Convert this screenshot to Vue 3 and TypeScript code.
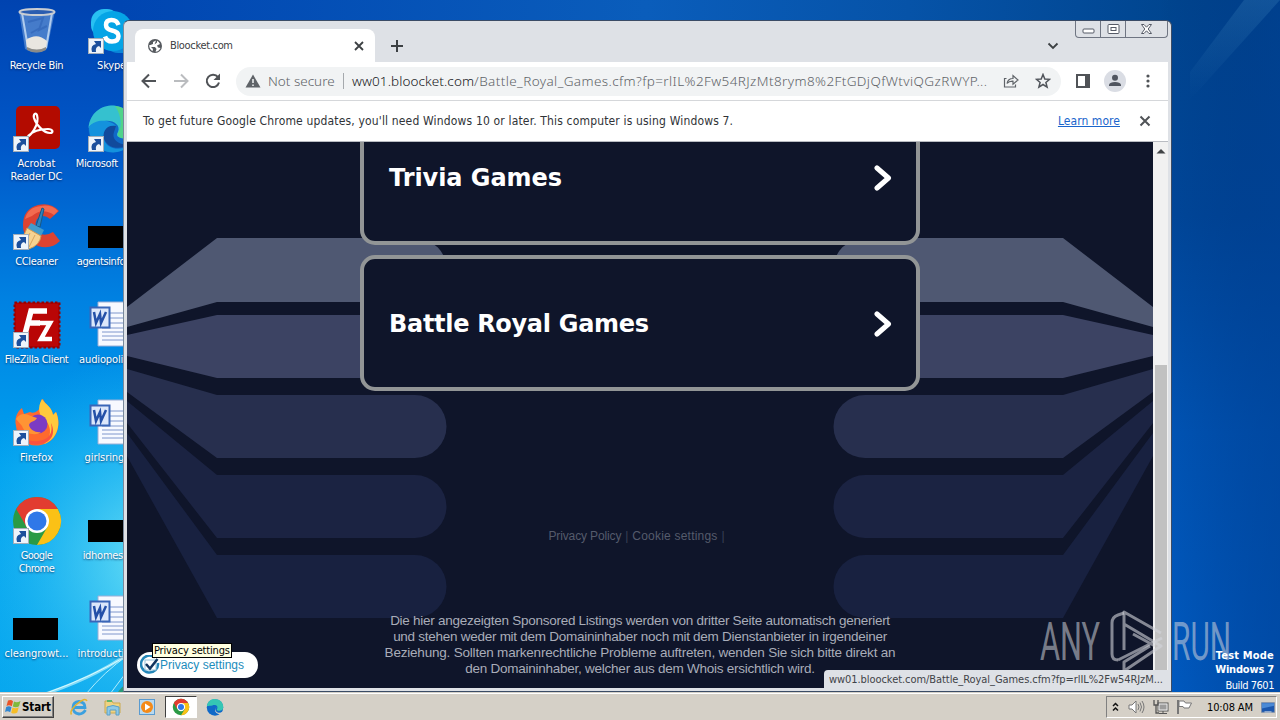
<script setup lang="ts">
interface Shortcut {
  kind: string
  lines: string[]
  widths: number[]
  link: boolean
}

const shortcuts: Shortcut[] = [
  { kind: 'bin', lines: ['Recycle Bin'], widths: [54], link: false },
  { kind: 'skype', lines: ['Skype'], widths: [29], link: true },
  { kind: 'acrobat', lines: ['Acrobat', 'Reader DC'], widths: [38, 52], link: true },
  { kind: 'edge', lines: ['Microsoft  Edge'], widths: [72], link: true },
  { kind: 'ccleaner', lines: ['CCleaner'], widths: [43], link: true },
  { kind: 'black', lines: ['agentsinform...'], widths: [70], link: false },
  { kind: 'filezilla', lines: ['FileZilla Client'], widths: [64], link: true },
  { kind: 'word', lines: ['audiopolitic...'], widths: [65], link: false },
  { kind: 'firefox', lines: ['Firefox'], widths: [33], link: true },
  { kind: 'word', lines: ['girlsring.rtf'], widths: [54], link: false },
  { kind: 'chrome', lines: ['Google', 'Chrome'], widths: [32, 36], link: true },
  { kind: 'black', lines: ['idhomes.jpg'], widths: [58], link: false },
  { kind: 'black', lines: ['cleangrowt...'], widths: [64], link: false },
  { kind: 'word', lines: ['introduction...'], widths: [68], link: false },
]

const cards: { title: string; width: number }[] = [
  { title: 'Trivia Games', width: 173 },
  { title: 'Battle Royal Games', width: 260 },
]

const legal: { text: string; width: number }[] = [
  { text: 'Die hier angezeigten Sponsored Listings werden von dritter Seite automatisch generiert', width: 500 },
  { text: 'und stehen weder mit dem Domaininhaber noch mit dem Dienstanbieter in irgendeiner', width: 494 },
  { text: 'Beziehung. Sollten markenrechtliche Probleme auftreten, wenden Sie sich bitte direkt an', width: 511 },
  { text: 'den Domaininhaber, welcher aus dem Whois ersichtlich wird.', width: 350 },
]

// Tracks a line of text so that it spans the given number of pixels.
const vFit = {
  mounted(el: HTMLElement, binding: { value: number }) {
    const count = (el.textContent ?? '').length
    const natural = el.getBoundingClientRect().width
    if (count > 1) {
      el.style.letterSpacing = `${(binding.value - natural) / (count - 1)}px`
    }
  },
}
</script>

<template>
  <div class="desktop">
    <svg class="wallpaper" viewBox="0 0 1280 720" preserveAspectRatio="none">
      <defs>
        <linearGradient id="wl" x1="0" y1="0" x2="0" y2="1">
          <stop offset="0" stop-color="#0043b0" />
          <stop offset=".2" stop-color="#0057c8" />
          <stop offset=".42" stop-color="#0082e2" />
          <stop offset=".65" stop-color="#00a2ef" />
          <stop offset="1" stop-color="#08a8ee" />
        </linearGradient>
        <linearGradient id="wr" x1="0" y1="0" x2="0" y2="1">
          <stop offset="0" stop-color="#00458f" />
          <stop offset=".3" stop-color="#00479a" />
          <stop offset=".6" stop-color="#0055b6" />
          <stop offset="1" stop-color="#005cc4" />
        </linearGradient>
        <linearGradient id="shade" x1="0" y1="0" x2="1" y2="0">
          <stop offset="0" stop-color="#002a70" stop-opacity="0" />
          <stop offset="1" stop-color="#003b8c" stop-opacity=".5" />
        </linearGradient>
        <linearGradient id="topglow" x1="0" y1="0" x2="1" y2="0">
          <stop offset="0" stop-color="#0046b2" />
          <stop offset=".5" stop-color="#0a5dbb" />
          <stop offset=".75" stop-color="#0653a8" />
          <stop offset="1" stop-color="#00458f" />
        </linearGradient>
        <radialGradient id="cy" cx="160" cy="560" r="210" gradientUnits="userSpaceOnUse">
          <stop offset="0" stop-color="#7deaf6" stop-opacity=".9" />
          <stop offset="1" stop-color="#20b8f4" stop-opacity="0" />
        </radialGradient>
        <linearGradient id="ray" x1="0" y1="0" x2="0" y2="1">
          <stop offset="0" stop-color="#3f86bd" stop-opacity=".28" />
          <stop offset="1" stop-color="#3f86bd" stop-opacity="0" />
        </linearGradient>
      </defs>
      <rect width="640" height="720" fill="url(#wl)" />
      <rect x="640" width="640" height="720" fill="url(#wr)" />
      <rect x="120" width="1052" height="40" fill="url(#topglow)" />
      <rect x="1160" y="0" width="120" height="720" fill="url(#shade)" />
      <rect width="380" height="720" fill="url(#cy)" />
      <path d="M1280 0H1244L1190 72V100Z" fill="url(#ray)" />
      <g fill="none" stroke="#d6fbff">
        <path d="M36 697Q90 680 128 654" stroke-width="3" opacity=".6" />
        <path d="M44 694Q94 676 128 655" stroke-width="1" />
        <path d="M86 694Q104 672 128 655M110 694L128 670" stroke-width="1" opacity=".8" />
      </g>
      <path d="M118 692Q122 686 126 685V692Z" fill="#2a9a78" />
    </svg>

    <div class="shortcuts">
      <div v-for="(item, i) in shortcuts" :key="i" class="shortcut">
        <svg class="pict" viewBox="0 0 48 48">
          <g v-if="item.kind === 'bin'">
            <path d="M6 5L12 43Q23 50 34 43L42 5Z" fill="#7da8dc" fill-opacity=".55" />
            <path d="M9 7L15 42M39 7L33 42" stroke="#d4e7fa" stroke-width="2" opacity=".75" />
            <path d="M13 34Q24 26 34 35L33 43Q24 48 14 43Z" fill="#e9e6e0" />
            <path d="M14 41Q24 46 33 41L33 44Q24 49 14 44Z" fill="#8b8b88" />
            <ellipse cx="24" cy="6" rx="17.5" ry="3" fill="#2b5db0" stroke="#c9cdd2" stroke-width="2" />
            <path d="M15 16L30 12L26 24L34 20M18 27L27 22" stroke="#2e62b5" stroke-width="2" fill="none" opacity=".6" />
          </g>
          <g v-else-if="item.kind === 'skype'">
            <rect x="3" y="3" width="29" height="29" rx="13" fill="#28c0f2" />
            <rect x="17" y="16" width="31" height="31" rx="13" fill="#0a86d8" />
            <circle cx="25" cy="25" r="20" fill="#05a4e6" />
            <path d="M30.500 19Q29 14 23.500 14Q18 14 18 19Q18 23 24 24.500Q30.500 26 30.500 30Q30.500 35.500 24 35.500Q18.500 35.500 17 30.500" fill="none" stroke="#fff" stroke-width="4.500" />
          </g>
          <g v-else-if="item.kind === 'acrobat'">
            <rect x="3" y="2" width="44" height="43" rx="5" fill="#b30b00" />
            <path d="M12 34C17 33 27 21 24 11C23 8 20 10 21 14C23 21 31 29 37 29C41 29 40 25 35 25C27 25 19 28 15 32" fill="none" stroke="#fff" stroke-width="2.200" stroke-linejoin="round" />
          </g>
          <g v-else-if="item.kind === 'edge'">
            <circle cx="24" cy="25" r="23.500" fill="#1069c8" />
            <path d="M.5 24C2 8 14 1 26 1.500C39 3 47 13 47 24C47 32 40 35 33 34C29 33 28 31 30 28C33 21 25 16 17 17C8 18 3 20 .5 24Z" fill="#35c1cf" />
            <path d="M27 2C40 3 47 14 47 24C47 32 39 35 33 34C29 32 29 30 31 27C35 19 31 7 27 2Z" fill="#5ad873" opacity=".75" />
            <path d="M1 23C8 14 23 16 28 22C19 21 13 28 17 38C21 45 31 47 41 42C32 51 17 50 9 42C3 36 1 30 1 23Z" fill="#1492dd" />
            <path d="M28 22C18 20 13 29 17 37C22 45 33 46 42 40C32 42 23 36 26 28Z" fill="#114a9c" />
          </g>
          <g v-else-if="item.kind === 'ccleaner'">
            <path d="M46 9Q38 0 25 3Q10 7 10 23Q10 38 25 44Q38 48 47 39L40 30Q32 35 26 31Q20 25 24 17Q30 11 37 17Z" fill="#dc4332" />
            <path d="M12 17Q15 5 28 4Q38 2 45 9L41 13Q29 5 19 14Z" fill="#f26b50" />
            <path d="M29 6L31 7L27 25L23 24Z" fill="#2d84be" stroke="#185886" />
            <path d="M18 21L31 28L28 34L14 27Z" fill="#429ccc" />
            <path d="M14 26L28 34Q27 43 16 47L3 40Q11 35 14 26Z" fill="#f5d391" stroke="#d19a50" />
            <path d="M17 31L11 43M22 33L16 45" stroke="#d8a45c" />
          </g>
          <g v-else-if="item.kind === 'filezilla'">
            <rect x="1.500" y="2.500" width="45" height="45" fill="#b40000" stroke="#940000" stroke-width="2" stroke-dasharray="2.500 2" />
            <rect x="3" y="4" width="42" height="42" fill="#b90606" />
            <path d="M11 38L18 11H34M14 23H27" fill="none" stroke="#fff" stroke-width="5.500" />
            <path d="M26 23H37L28 39H39" fill="none" stroke="#fff" stroke-width="4.500" />
          </g>
          <g v-else-if="item.kind === 'firefox'">
            <path d="M3 28C1 19 5 13 9 10L11 16L17 14C21 16 26 13 28 8C27 5 28 2 30 1C32 7 39 9 40 17L43 14C49 27 44 44 28 47C15 50 4 41 3 28Z" fill="#ff6a2d" />
            <path d="M29 1C33 7 39 9 40 17L43 14C49 28 43 42 31 46C40 38 38 27 31 21C26 17 24 10 29 1Z" fill="#ffc93c" />
            <path d="M4 29C7 41 17 44 25 43C37 42 40 34 38 25C43 35 39 44 28 46C14 49 4 41 4 29Z" fill="#fb5340" />
            <circle cx="25" cy="26" r="9.500" fill="#7b3bc4" />
            <path d="M3 21C8 14 13 16 18 18L24 20C22 24 17 23 16 27C17 32 23 35 28 34C24 38 12 37 9 28Z" fill="#ff9434" />
          </g>
          <g v-else-if="item.kind === 'chrome'">
            <circle cx="24" cy="25" r="24" fill="#2a9a45" />
            <path d="M3.200 13A24 24 0 0 1 44.800 13H24L13.600 31Z" fill="#e23c30" />
            <path d="M44.800 13A24 24 0 0 1 24 49L34.400 31L24 13Z" fill="#fbc116" />
            <circle cx="24" cy="25" r="12" fill="#fff" />
            <circle cx="24" cy="25" r="9.500" fill="#2f78e8" />
          </g>
          <g v-else-if="item.kind === 'word'">
            <path d="M10 2H48V46H10Z" fill="#f7f9ff" stroke="#9aaed6" />
            <path d="M14 13H46M14 18H46M14 23H46M14 28H46M14 32H46M14 36H46M14 40H46" stroke="#7f96cc" />
            <rect x="2.500" y="7.500" width="19" height="20" fill="#dce7fb" stroke="#3a66b8" stroke-width="2" />
            <path d="M6 12L8 23L12 14L13 23L18 12" fill="none" stroke="#2450a8" stroke-width="2.500" />
          </g>
          <rect v-else x="0" y="24" width="45" height="22" fill="#000" />
          <g v-if="item.link">
            <rect x=".5" y="32.500" width="15" height="15" fill="#eef4fb" stroke="#a3aeba" />
            <path d="M4 46Q2 39 8 38L6 35H13V42L11 40Q7 41 8 46Z" fill="#1c4f9c" />
          </g>
        </svg>
        <div v-for="(line, n) in item.lines" :key="n" class="caption">
          <span v-fit="item.widths[n]" class="run">{{ line }}</span>
        </div>
      </div>
    </div>

    <svg class="watermark" viewBox="0 0 200 70">
      <g fill="#d3d5dc" fill-opacity=".55">
        <text x="4" y="54" textLength="60" lengthAdjust="spacingAndGlyphs" class="brand">ANY</text>
        <text x="136" y="54" textLength="59" lengthAdjust="spacingAndGlyphs" class="brand">RUN</text>
      </g>
      <g fill="none" stroke="#d3d5dc" stroke-opacity=".6" stroke-width="3" stroke-linejoin="round">
        <path d="M88 7L82 9Q76 11 76 17V48Q76 54 82 54" />
        <path d="M88 44V6L125 27M88 18L125 40L88 65V56L114 40" />
        <path d="M97 28L119 40M82 54L126 32" />
      </g>
    </svg>

    <div class="build">
      <span v-fit="58" class="run strong">Test Mode</span>
      <span v-fit="59" class="run strong">Windows 7</span>
      <span v-fit="49" class="run last">Build 7601</span>
    </div>

    <div class="window">
      <div class="tabstrip">
        <div class="tab">
          <svg width="16" height="16" viewBox="0 0 16 16">
            <circle cx="8" cy="8" r="7" fill="#55595e" />
            <path d="M9 2.500L6 4V6L3.500 7L2.300 7Q2 11 5.500 13.200L6 11L4 9H8L9.500 11L8.500 13.800Q12 13.500 13.500 10L11 9.500L10 7.500L13 6Q12 3.500 10 2.700L10 4.500L7.500 6.500" fill="#fff" />
          </svg>
          <span v-fit="63" class="run tabname">Bloocket.com</span>
          <svg class="tabclose" width="10" height="10" viewBox="0 0 10 10"><path d="M1 1L9 9M9 1L1 9" stroke="#3c4043" stroke-width="1.800" /></svg>
        </div>
        <svg class="plus" width="12" height="12" viewBox="0 0 12 12"><path d="M6 0V12M0 6H12" stroke="#3c4043" stroke-width="2" /></svg>
        <svg class="drop" width="12" height="8" viewBox="0 0 12 8"><path d="M1.500 1.500L6 6L10.500 1.500" fill="none" stroke="#3c4043" stroke-width="1.800" /></svg>
        <div class="controls">
          <span class="ctl"><svg width="13" height="13" viewBox="0 0 13 13"><rect x="1" y="6" width="11" height="4" rx="1" fill="#fff" stroke="#555a66" /></svg></span>
          <span class="ctl"><svg width="13" height="13" viewBox="0 0 13 13"><rect x="1" y="1.500" width="11" height="9" rx="1" fill="#fff" stroke="#555a66" /><rect x="4" y="4.500" width="5" height="3" fill="#fff" stroke="#555a66" /></svg></span>
          <span class="ctl wide"><svg width="13" height="13" viewBox="0 0 13 13"><path d="M1.500 1.500H4L6.500 4.200L9 1.500H11.500L8.200 6L11.500 10.500H9L6.500 7.800L4 10.500H1.500L4.800 6Z" fill="#fff" stroke="#555a66" /></svg></span>
        </div>
      </div>

      <div class="toolbar">
        <svg class="back" width="16" height="16" viewBox="0 0 16 16"><path d="M15 8H2M8 1.500L1.500 8L8 14.500" fill="none" stroke="#505357" stroke-width="2" /></svg>
        <svg class="fwd" width="16" height="16" viewBox="0 0 16 16"><path d="M1 8H14M8 1.500L14.500 8L8 14.500" fill="none" stroke="#babcbf" stroke-width="2" /></svg>
        <svg class="reload" width="16" height="16" viewBox="0 0 16 16"><path d="M13 4.200A6.200 6.200 0 1 0 14 9.500" fill="none" stroke="#505357" stroke-width="2" /><path d="M15 .5V7H8.500Z" fill="#505357" /></svg>
        <div class="omnibox">
          <svg class="warn" width="16" height="14" viewBox="0 0 16 14"><path d="M8 .5L15.500 13.500H.5Z" fill="#5f6368" /><path d="M8 5V9M8 10.500V12" stroke="#f1f3f4" stroke-width="1.500" /></svg>
          <span v-fit="67" class="run insecure">Not secure</span>
          <span class="bar"></span>
          <span v-fit="122" class="run host">ww01.bloocket.com</span>
          <span v-fit="513" class="run path">/Battle_Royal_Games.cfm?fp=rlIL%2Fw54RJzMt8rym8%2FtGDjQfWtviQGzRWYP...</span>
          <svg class="share" width="16" height="16" viewBox="0 0 16 16"><path d="M3.500 5.500H1.500V14H12.500V11.500M4 10.500Q5 5.500 10 5.500V2.500L15 7L10 11.200V8.200Q6 8 4 10.500Z" fill="none" stroke="#5f6368" stroke-width="1.200" /></svg>
          <svg class="star" width="16" height="16" viewBox="0 0 16 16"><path d="M8 1.500L9.800 6L14.600 6.300L10.900 9.400L12.100 14.100L8 11.500L3.900 14.100L5.100 9.400L1.400 6.300L6.200 6Z" fill="none" stroke="#50545a" stroke-width="1.500" /></svg>
        </div>
        <svg class="panel" width="14" height="14" viewBox="0 0 14 14"><rect x="1" y="1" width="12" height="12" fill="#fff" stroke="#505357" stroke-width="2" /><rect x="9" y="1" width="4" height="12" fill="#505357" /></svg>
        <svg class="avatar" width="22" height="22" viewBox="0 0 22 22"><circle cx="11" cy="11" r="11" fill="#dadde4" /><circle cx="11" cy="7.800" r="3" fill="#50555f" /><path d="M5 16V14.500Q6 12 11 12T17 14.500V16Z" fill="#50555f" /></svg>
        <svg class="dots" width="4" height="14" viewBox="0 0 4 14"><g fill="#505357"><circle cx="2" cy="2" r="1.600" /><circle cx="2" cy="7" r="1.600" /><circle cx="2" cy="12" r="1.600" /></g></svg>
      </div>

      <div class="infobar">
        <span v-fit="590" class="run">To get future Google Chrome updates, you'll need Windows 10 or later. This computer is using Windows 7.</span>
        <span v-fit="62" class="run more">Learn more</span>
        <svg width="12" height="12" viewBox="0 0 12 12"><path d="M1.500 1.500L10.500 10.500M10.500 1.500L1.500 10.500" stroke="#505357" stroke-width="2" /></svg>
      </div>

      <div class="content">
        <div class="page">
          <svg class="backdrop" viewBox="127 142 1026 546">
            <defs>
              <g id="arms">
                <path d="M127 307L217 238H415A32 32 0 0 1 415 302H217L127 327Z" fill="#4f5872" />
                <path d="M127 335L217 315H415A31.500 31.500 0 0 1 415 378H217L127 356Z" fill="#3c4363" />
                <path d="M127 369L217 395H415A31.500 31.500 0 0 1 415 458H217L127 392Z" fill="#272f4e" />
                <path d="M127 401L217 475H415A31.500 31.500 0 0 1 415 538H217L127 423Z" fill="#1b2342" />
                <path d="M127 433L217 555H415A31.500 31.500 0 0 1 415 618H217L127 456Z" fill="#182140" />
              </g>
            </defs>
            <use href="#arms" />
            <use href="#arms" transform="translate(1280 0) scale(-1 1)" />
          </svg>
          <div class="cards">
            <div v-for="card in cards" :key="card.title" class="card">
              <span v-fit="card.width" class="run">{{ card.title }}</span>
              <svg width="18" height="26" viewBox="0 0 18 26"><path d="M3 3L14.500 13L3 23" fill="none" stroke="#fff" stroke-width="5" stroke-linecap="round" stroke-linejoin="round" /></svg>
            </div>
          </div>
          <div class="links">
            <span v-fit="73" class="run">Privacy Policy</span>
            <span class="run sep">|</span>
            <span v-fit="85" class="run">Cookie settings</span>
            <span class="run sep">|</span>
          </div>
          <div class="legal">
            <div v-for="row in legal" :key="row.text"><span v-fit="row.width" class="run">{{ row.text }}</span></div>
          </div>
          <div class="pill">
            <svg width="20" height="20" viewBox="0 0 20 20"><path d="M15 2.500A8.500 8.500 0 1 0 18 8" fill="none" stroke="#2486b8" stroke-width="2.500" /><rect x="5" y="5" width="11" height="10" fill="#fff" stroke="#94c2d9" /><path d="M6 9L10 13.500L17.500 4" fill="none" stroke="#12345e" stroke-width="2.500" /></svg>
            <span v-fit="84" class="run">Privacy settings</span>
          </div>
          <div class="tip"><span v-fit="76" class="run">Privacy settings</span></div>
        </div>
        <div class="scroll">
          <svg width="15" height="16" viewBox="0 0 15 16"><path d="M3.500 11.500L8 7L12.500 11.500Z" fill="#404346" /></svg>
          <div class="thumb"></div>
        </div>
        <div class="status"><span v-fit="334" class="run">ww01.bloocket.com/Battle_Royal_Games.cfm?fp=rlIL%2Fw54RJzM...</span></div>
      </div>
    </div>

    <div class="taskbar">
      <div class="start">
        <svg width="16" height="16" viewBox="0 0 16 16"><path d="M3 1.500Q6 0 8 2.200L6.800 7.200Q4 5.500 1.500 7Z" fill="#ea5428" /><path d="M9 2.600Q12 4 15.500 2L14 7.300Q11 9 7.800 7.500Z" fill="#7fb93c" /><path d="M1.200 8Q4 6.500 6.500 8.200L5.200 13.200Q2.500 11.500 0 13Z" fill="#3187d1" /><path d="M7.500 8.500Q10.500 10 13.700 8.200L12.300 13.500Q9.500 15.500 6.200 13.700Z" fill="#f6bd26" /></svg>
        <span v-fit="29" class="run">Start</span>
      </div>
      <div class="quick">
        <span class="cell"><svg width="18" height="18" viewBox="0 0 18 18"><path d="M15.500 12Q13 16 9 16Q3 15 3 9.500T9 3.500Q15 4 15 9.500H4.500" fill="none" stroke="#3ba0df" stroke-width="2.800" /><path d="M1.500 16.500Q-1 13 7 6T17 3" fill="none" stroke="#e5b32c" stroke-width="1.500" /></svg></span>
        <span class="cell"><svg width="18" height="18" viewBox="0 0 18 18"><path d="M1 3H8L9 5H16V15H1Z" fill="#efd382" stroke="#cba94e" /><rect x="3" y="2" width="5" height="2" fill="#5eb66c" /><path d="M3 9Q9 6 15 9V17H12V12H6V17H3Z" fill="#8ecae8" stroke="#5a9fc6" /></svg></span>
        <span class="cell"><svg width="18" height="18" viewBox="0 0 18 18"><rect x="1.500" y="1.500" width="15" height="15" fill="#b9d9ef" stroke="#5a9bd0" /><circle cx="9" cy="9" r="6" fill="#f48a18" /><path d="M7 5.500L12.500 9L7 12.500Z" fill="#fff" /></svg></span>
        <span class="cell on"><svg width="18" height="18" viewBox="0 0 48 48"><circle cx="24" cy="24" r="22" fill="#2a9a45" /><path d="M5 13A22 22 0 0 1 43 13H24L14 30Z" fill="#e23c30" /><path d="M43 13A22 22 0 0 1 24 46L34 30L24 13Z" fill="#fbc116" /><circle cx="24" cy="24" r="11" fill="#fff" /><circle cx="24" cy="24" r="8" fill="#2f78e8" /></svg></span>
        <span class="cell"><svg width="18" height="18" viewBox="0 0 48 48"><circle cx="24" cy="25" r="22" fill="#1069c8" /><path d="M2 22C5 8 14 2 26 3C39 4 46 13 46 24C46 32 40 35 33 34C29 33 28 31 30 28C33 21 25 17 17 20C8 22 5 20 2 22Z" fill="#35c6b4" /><path d="M28 24C24 28 24 36 32 39Q38 41 45 36L40 44Q24 42 24 32Z" fill="#d4d0c8" /></svg></span>
      </div>
      <div class="tray">
        <svg class="up" width="7" height="10" viewBox="0 0 7 10"><path d="M1 4L3.500 1.500L6 4M1 8.500L3.500 6L6 8.500" fill="none" stroke="#111" stroke-width="1.500" /></svg>
        <svg class="vol" width="17" height="16" viewBox="0 0 17 16"><path d="M1 6H4L8 2V14L4 10H1Z" fill="#fff" stroke="#777" /><path d="M10 5Q12 8 10 11M12 3.500Q15 8 12 12.500M14 2Q18 8 14 14" fill="none" stroke="#777" /></svg>
        <svg class="net" width="16" height="16" viewBox="0 0 16 16"><rect x="5" y="4" width="10" height="8" fill="#9c9c9c" stroke="#555" /><rect x="6" y="5" width="8" height="6" fill="none" stroke="#eee" /><path d="M6 14.500H14M10 12V14" stroke="#555" /><path d="M1 1V6H5V1M3 6V14H6" fill="none" stroke="#555" stroke-width="1.300" /></svg>
        <svg class="flag" width="17" height="16" viewBox="0 0 17 16"><path d="M2 1V15" stroke="#777" stroke-width="2" /><path d="M3 2H8L9.500 4H15.500L13 9H8L7 7.500H3Z" fill="#fff" stroke="#777" /></svg>
        <span v-fit="46" class="run clock">10:08 AM</span>
        <svg class="show" width="14" height="13" viewBox="0 0 16 14"><path d="M.5 1.500H15.500V12.500H.5Z" fill="#1c57ad" stroke="#7f8fa8" /><path d="M1 2H15V5L1 8Z" fill="#4b8ad6" /><path d="M4 12H12" stroke="#dce3ec" /></svg>
      </div>
    </div>

    <svg class="watermark" viewBox="0 0 200 70">
      <defs>
        <clipPath id="over"><rect width="136" height="64" /></clipPath>
      </defs>
      <g clip-path="url(#over)">
        <text x="4" y="54" textLength="60" lengthAdjust="spacingAndGlyphs" class="brand" fill="#d3d5dc" fill-opacity=".55">ANY</text>
        <g fill="none" stroke="#d3d5dc" stroke-opacity=".6" stroke-width="3" stroke-linejoin="round">
          <path d="M88 7L82 9Q76 11 76 17V48Q76 54 82 54" />
          <path d="M88 44V6L125 27M88 18L125 40L88 65V56L114 40" />
          <path d="M97 28L119 40M82 54L126 32" />
        </g>
      </g>
    </svg>
  </div>
</template>

<style>
html,
body {
  margin: 0;
  overflow: hidden;
}
</style>

<style scoped>
.desktop {
  position: relative;
  width: 1280px;
  height: 720px;
  overflow: hidden;
  font-family: "DejaVu Sans Condensed", "DejaVu Sans", sans-serif;
  font-stretch: condensed;
  font-size: 11px;
  line-height: 13px;
}
.desktop svg {
  display: block;
  flex: none;
}
.run {
  display: inline-block;
  white-space: pre;
  flex: none;
}
.wallpaper {
  position: absolute;
  inset: 0;
  width: 1280px;
  height: 720px;
}
.shortcuts {
  position: absolute;
  left: -1px;
  top: 6px;
  display: grid;
  grid-template-columns: 75px 75px;
  grid-auto-rows: 98px;
}
.pict {
  width: 48px;
  height: 48px;
  margin: 0 0 5px 14px;
  overflow: visible;
}
.caption {
  display: flex;
  justify-content: center;
  color: #fff;
  text-shadow: 0 1px 2px rgba(0, 20, 70, .7);
}
.build {
  position: absolute;
  right: 6px;
  top: 649px;
  display: flex;
  flex-direction: column;
  align-items: flex-end;
  gap: 1px;
  color: #fff;
}
.strong {
  font-weight: 700;
}
.last {
  margin-top: 2px;
}
.window {
  position: absolute;
  left: 123px;
  top: 20px;
  width: 1049px;
  height: 672px;
  box-sizing: border-box;
  border: 1px solid #3b4c66;
  border-left-color: #7a8a9c;
  border-radius: 6px 6px 0 0;
  padding: 0 3px 3px 3px;
  background: #dee1e6;
  display: flex;
  flex-direction: column;
}
.tabstrip {
  height: 41px;
  display: flex;
}
.tab {
  width: 240px;
  height: 33px;
  margin: 8px 0 0 8px;
  border-radius: 8px 8px 0 0;
  background: #fff;
  display: flex;
  align-items: center;
  box-sizing: border-box;
  padding: 0 11px 0 12px;
  color: #3c4043;
}
.tabname {
  margin-left: 7px;
}
.tabclose {
  margin-left: auto;
}
.plus {
  margin: 19px 0 0 16px;
}
.drop {
  margin: 21px 16px 0 auto;
}
.controls {
  display: flex;
  height: 16px;
  border: 1px solid #6f7582;
  border-top: 0;
  border-radius: 0 0 4px 4px;
}
.ctl {
  width: 24px;
  display: flex;
  align-items: center;
  justify-content: center;
  border-right: 1px solid #6f7582;
}
.wide {
  width: 41px;
  border-right: 0;
}
.toolbar {
  height: 38px;
  background: #fff;
  border-bottom: 1px solid #d5d7da;
  display: flex;
  align-items: center;
}
.back {
  margin-left: 14px;
}
.fwd,
.reload {
  margin-left: 16px;
}
.omnibox {
  width: 825px;
  height: 29px;
  margin-left: 15px;
  border-radius: 15px;
  background: #f1f3f4;
  display: flex;
  align-items: center;
  color: #5f6368;
  font-family: "Noto Sans", sans-serif;
  font-weight: 300;
  font-stretch: normal;
  font-size: 13.500px;
  line-height: 18px;
}
.warn {
  margin-left: 9px;
}
.insecure {
  margin-left: 7px;
  width: 67px;
}
.bar {
  width: 1px;
  height: 16px;
  margin: 0 8px 0 8px;
  background: #a5a9ad;
}
.host {
  color: #15171a;
}
.share {
  margin-left: auto;
}
.star {
  margin: 0 10px 0 16px;
}
.panel {
  margin-left: 15px;
}
.avatar {
  margin-left: 14px;
}
.dots {
  margin-left: 20px;
}
.infobar {
  height: 41px;
  background: #fff;
  border-bottom: 1px solid #b9bcc2;
  box-sizing: border-box;
  display: flex;
  align-items: center;
  padding: 0 17px 0 16px;
  color: #303337;
  font-size: 12px;
}
.more {
  margin: 0 19px 0 auto;
  color: #1a65cc;
  text-decoration: underline;
}
.content {
  position: relative;
  flex: 1;
  min-height: 0;
  display: flex;
  overflow: hidden;
  background: #f1f1f1;
}
.page {
  position: relative;
  width: 1026px;
  overflow: hidden;
  background: #0f152a;
}
.backdrop {
  position: absolute;
  left: 0;
  top: 0;
  width: 1026px;
  height: 546px;
}
.cards {
  position: relative;
  display: flex;
  flex-direction: column;
  align-items: center;
  gap: 10px;
  margin-top: -33px;
}
.card {
  width: 560px;
  height: 136px;
  box-sizing: border-box;
  border: 4px solid #929596;
  border-radius: 15px;
  background: #0f152a;
  display: flex;
  align-items: center;
  justify-content: space-between;
  padding: 1px 24px 0 25px;
  color: #fff;
  font-family: "DejaVu Sans", sans-serif;
  font-stretch: normal;
  font-weight: 700;
  font-size: 24px;
  line-height: 30px;
}
.links {
  position: relative;
  margin-top: 137px;
  padding-right: 3px;
  display: flex;
  justify-content: center;
  color: #555b6c;
  font-family: "Liberation Sans", sans-serif;
  font-size: 12px;
  line-height: 16px;
}
.sep {
  width: 11px;
  text-align: center;
  color: #394055;
}
.legal {
  position: relative;
  margin-top: 69px;
  text-align: center;
  color: #a9adb9;
  font-family: "Liberation Sans", sans-serif;
  font-size: 13.500px;
  line-height: 16px;
}
.legal > div {
  height: 16px;
}
.pill {
  position: absolute;
  left: 10px;
  top: 510px;
  width: 121px;
  height: 26px;
  box-sizing: border-box;
  padding-left: 3px;
  border-radius: 13px;
  background: #fff;
  display: flex;
  align-items: center;
  color: #1b8cbc;
  font-family: "Liberation Sans", sans-serif;
  font-size: 12px;
}
.tip {
  position: absolute;
  left: 25px;
  top: 501px;
  width: 80px;
  height: 15px;
  box-sizing: border-box;
  border: 1px solid #000;
  padding-left: 1px;
  background: #ffffe1;
  color: #000;
}
.scroll {
  width: 15px;
  background: #f1f1f1;
}
.thumb {
  width: 12px;
  height: 320px;
  margin: 207px 0 0 2px;
  background: #c1c1c1;
}
.status {
  position: absolute;
  right: 0;
  bottom: 0;
  width: 344px;
  height: 18px;
  box-sizing: border-box;
  padding: 3px 0 0 5px;
  border-radius: 4px 0 0 0;
  background: #dee1e6;
  color: #3f4348;
}
.watermark {
  position: absolute;
  left: 1036px;
  top: 606px;
  width: 200px;
  height: 70px;
}
.brand {
  font-family: Roboto, sans-serif;
  font-weight: 400;
  font-size: 53px;
  font-stretch: normal;
}
.taskbar {
  position: absolute;
  left: 0;
  bottom: 0;
  width: 1280px;
  height: 28px;
  box-sizing: border-box;
  border-top: 1px solid #d4d0c8;
  box-shadow: inset 0 1px #fff;
  background: #d5d0c7;
  display: flex;
  align-items: flex-start;
}
.start {
  width: 52px;
  height: 22px;
  margin: 3px 0 0 2px;
  box-sizing: border-box;
  border: 1px solid;
  border-color: #fff #404040 #404040 #fff;
  box-shadow: inset -1px -1px #808080;
  display: flex;
  align-items: center;
  gap: 1px;
  padding-left: 2px;
  font-weight: 700;
  font-size: 11.500px;
}
.quick {
  display: flex;
  gap: 2px;
  margin: 3px 0 0 9px;
}
.cell {
  width: 32px;
  height: 22px;
  box-sizing: border-box;
  display: flex;
  align-items: center;
  justify-content: center;
}
.on {
  background: #fff;
  border: 1px solid;
  border-color: #404040 #fff #fff #404040;
}
.tray {
  width: 171px;
  height: 22px;
  margin: 3px 3px 0 auto;
  box-sizing: border-box;
  border: 1px solid;
  border-color: #808080 #fff #fff #808080;
  display: flex;
  align-items: center;
  padding-left: 5px;
}
.vol {
  margin-left: 9px;
}
.net {
  margin-left: 8px;
}
.flag {
  margin-left: 7px;
}
.clock {
  margin-left: 14px;
}
.show {
  margin-left: 8px;
}
</style>
